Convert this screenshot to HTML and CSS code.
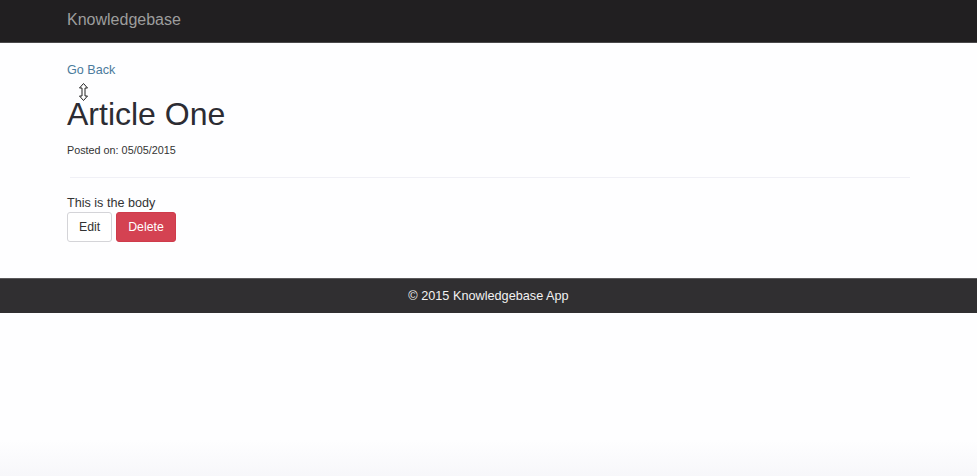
FILE: index.html
```html
<!DOCTYPE html>
<html lang="en">
<head>
<meta charset="utf-8">
<title>Knowledgebase</title>
<link rel="stylesheet" href="styles.css">
</head>
<body>
<nav class="navbar">
  <div class="container">
    <a class="brand" href="#">Knowledgebase</a>
  </div>
</nav>
<main class="container main">
  <a class="back" href="#">Go Back</a>
  <h1 class="title">Article One</h1>
  <p class="meta">Posted on: 05/05/2015</p>
  <hr class="rule">
  <p class="body-text">This is the body</p>
  <div class="actions">
    <a class="btn btn-default" href="#">Edit</a>
    <a class="btn btn-danger" href="#">Delete</a>
  </div>
  <svg class="cursor" width="9" height="18" viewBox="0 0 9 18" aria-hidden="true">
    <path d="M4.5 0.5 L8.5 5 L6 5 L6 13 L8.5 13 L4.5 17.5 L0.5 13 L3 13 L3 5 L0.5 5 Z" fill="#fff" stroke="#222" stroke-width="1"/>
  </svg>
</main>
<footer class="footer">
  <p>&copy; 2015 Knowledgebase App</p>
</footer>
</body>
</html>
```

FILE: styles.css
```css
* { box-sizing: border-box; }

html, body {
  margin: 0;
  padding: 0;
}

body {
  font-family: "Liberation Sans", Arial, sans-serif;
  font-size: 12.3px;
  line-height: 17px;
  color: #333;
  background: linear-gradient(to bottom, #fefeff 0, #fefeff 440px, #f7f7fa 476px);
  min-height: 476px;
}

.container {
  padding: 0 67px;
}

.navbar {
  height: 43px;
  background: #211f21;
  border-bottom: 1px solid #4a494b;
}

.navbar .container {
  height: 42px;
  display: flex;
  align-items: center;
}

.brand {
  color: #9d9d9d;
  font-size: 16px;
  text-decoration: none;
  line-height: 20px;
  padding-bottom: 3px;
}

.main {
  position: relative;
  padding-top: 19px;
}

.back {
  display: block;
  color: #4b7b9c;
  text-decoration: none;
  font-size: 12.6px;
  line-height: 17px;
}

.title {
  margin: 18px 0 0;
  font-size: 32px;
  line-height: 35px;
  font-weight: 400;
  color: #2c2c33;
}

.meta {
  margin: 11px 0 0;
  font-size: 10.8px;
  line-height: 15px;
}

.rule {
  margin: 19px 0 0 3px;
  border: 0;
  border-top: 1px solid #f0f0f6;
  height: 0;
}

.body-text {
  margin: 17px 0 0;
  font-size: 12.6px;
}

.actions {
  display: flex;
  gap: 4px;
}

.btn {
  display: inline-flex;
  align-items: center;
  height: 30px;
  padding: 0 11px;
  border: 1px solid transparent;
  border-radius: 3px;
  text-decoration: none;
  font-size: 12.3px;
}

.btn-default {
  color: #333;
  background: #fff;
  border-color: #d4d4d8;
}

.btn-danger {
  color: #fff;
  background: #d44252;
  border-color: #cf3b4b;
}

.cursor {
  position: absolute;
  left: 79px;
  top: 40px;
}

.footer {
  margin-top: 36px;
  height: 35px;
  background: #302f31;
  border-top: 1px solid #5a595b;
  display: flex;
  align-items: center;
  justify-content: center;
}

.footer p {
  margin: 0;
  color: #f2f2f2;
  font-size: 12.7px;
}
```
